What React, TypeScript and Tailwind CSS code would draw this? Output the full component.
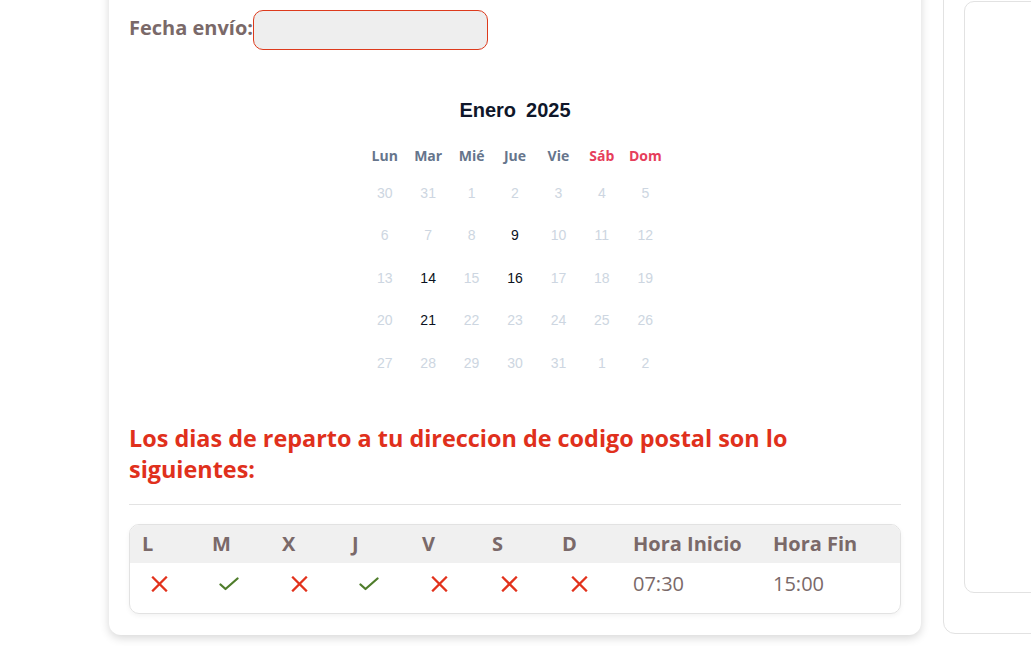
import React from 'react';

const WEEKDAYS = ['Lun', 'Mar', 'Mié', 'Jue', 'Vie', 'Sáb', 'Dom'];

// January 2025 laid out Monday-first, with spill-over days from the adjacent months
const DAYS: { n: number; active?: boolean }[] = [
  30, 31, 1, 2, 3, 4, 5,
  6, 7, 8, 9, 10, 11, 12,
  13, 14, 15, 16, 17, 18, 19,
  20, 21, 22, 23, 24, 25, 26,
  27, 28, 29, 30, 31, 1, 2,
].map((n, i) => ({ n, active: i === 10 || i === 15 || i === 17 || i === 22 }));

const DELIVERY = [false, true, false, true, false, false, false];
const COLS = ['L', 'M', 'X', 'J', 'V', 'S', 'D'];

const Cross = () => (
  <svg width="17" height="16" viewBox="0 0 17 16" fill="none" stroke="#e2321c" strokeWidth="2.3" strokeLinecap="square">
    <line x1="2" y1="1.5" x2="15" y2="14.5" />
    <line x1="15" y1="1.5" x2="2" y2="14.5" />
  </svg>
);

const Tick = () => (
  <svg width="20" height="14" viewBox="0 0 20 14" fill="none" stroke="#4f7d2b" strokeWidth="2.3" strokeLinecap="round" strokeLinejoin="round">
    <polyline points="1.5,7.5 6.5,12 18.5,1.5" />
  </svg>
);

const App = () => {
  return (
    <div className="w-[1031px] h-[646px] overflow-hidden bg-white" style={{ fontFamily: '"Open Sans", sans-serif' }}>
      <div className="flex items-stretch -mt-[20px] pl-[109px] gap-[22px]">
        {/* Delivery card */}
        <section className="w-[812px] shrink-0 bg-white rounded-[12px] shadow-[0_3px_10px_rgba(0,0,0,0.16)] px-[20px] pt-[30px] pb-[21px]">
          <div className="flex items-center h-[40px]">
            <span className="pb-[4px] text-[20px] font-bold text-[#7a6969]">Fecha envío:</span>
            <div className="w-[235px] h-[40px] rounded-[10px] border border-[#dd3a1c] bg-[#eeeeee]" />
          </div>

          {/* Calendar */}
          <div className="mt-[48px] flex flex-col items-center">
            <div className="h-[24px] flex items-center gap-[10px] text-[20px] font-bold text-[#0f172a]" style={{ fontFamily: '"Liberation Sans", Arial, sans-serif' }}>
              <span>Enero</span>
              <span>2025</span>
            </div>
            <div className="mt-[16px] w-[304px] grid grid-cols-7">
              {WEEKDAYS.map((d, i) => (
                <div
                  key={d}
                  className={`h-[34px] flex items-center justify-center text-[14px] font-bold ${i > 4 ? 'text-[#e63e5c]' : 'text-[#66758c]'}`}
                >
                  {d}
                </div>
              ))}
              {DAYS.map((d, i) => (
                <div
                  key={i}
                  className={`h-[42.5px] flex items-center justify-center text-[14px] ${d.active ? 'text-[#0b1222]' : 'text-[#cdd6e1]'}`}
                  style={{ fontFamily: '"Liberation Sans", Arial, sans-serif' }}
                >
                  {d.n}
                </div>
              ))}
            </div>
          </div>

          <h2 className="mt-[38px] text-[23.4px] leading-[31px] font-bold text-[#e0301c]">
            Los dias de reparto a tu direccion de codigo postal son lo siguientes:
          </h2>

          <hr className="mt-[19px] border-0 h-px bg-[#e3e3e3]" />

          {/* Delivery days table */}
          <div className="mt-[19px] rounded-[10px] border border-[#e2e2e2] overflow-hidden shadow-[0_2px_5px_rgba(0,0,0,0.05)]">
            <div className="grid grid-cols-[70px_70px_70px_70px_70px_70px_70px_140px_1fr] h-[38px] items-center bg-[#f0f0f0] text-[20px] font-bold text-[#7a6969]">
              {COLS.map((c) => (
                <div key={c} className="pl-[12px]">{c}</div>
              ))}
              <div className="pl-[13px]">Hora Inicio</div>
              <div className="pl-[13px]">Hora Fin</div>
            </div>
            <div className="grid grid-cols-[70px_70px_70px_70px_70px_70px_70px_140px_1fr] h-[50px] pt-[9px] items-start text-[20px] text-[#7a6969]">
              {DELIVERY.map((ok, i) => (
                <div key={i} className={`h-[24px] flex items-center ${ok ? 'pl-[19px]' : 'pl-[21px]'}`}>
                  {ok ? <Tick /> : <Cross />}
                </div>
              ))}
              <div className="pl-[13px] h-[24px] leading-[24px]">07:30</div>
              <div className="pl-[13px] h-[24px] leading-[24px]">15:00</div>
            </div>
          </div>
        </section>

        {/* Side panel */}
        <aside className="w-[300px] shrink-0 mb-px rounded-[12px] border border-[#e2e2e2] flex flex-col pt-[20px] pb-[40px] pl-[20px]">
          <div className="flex-1 rounded-[10px] border border-[#e2e2e2]" />
        </aside>
      </div>
    </div>
  );
};

export default App;
